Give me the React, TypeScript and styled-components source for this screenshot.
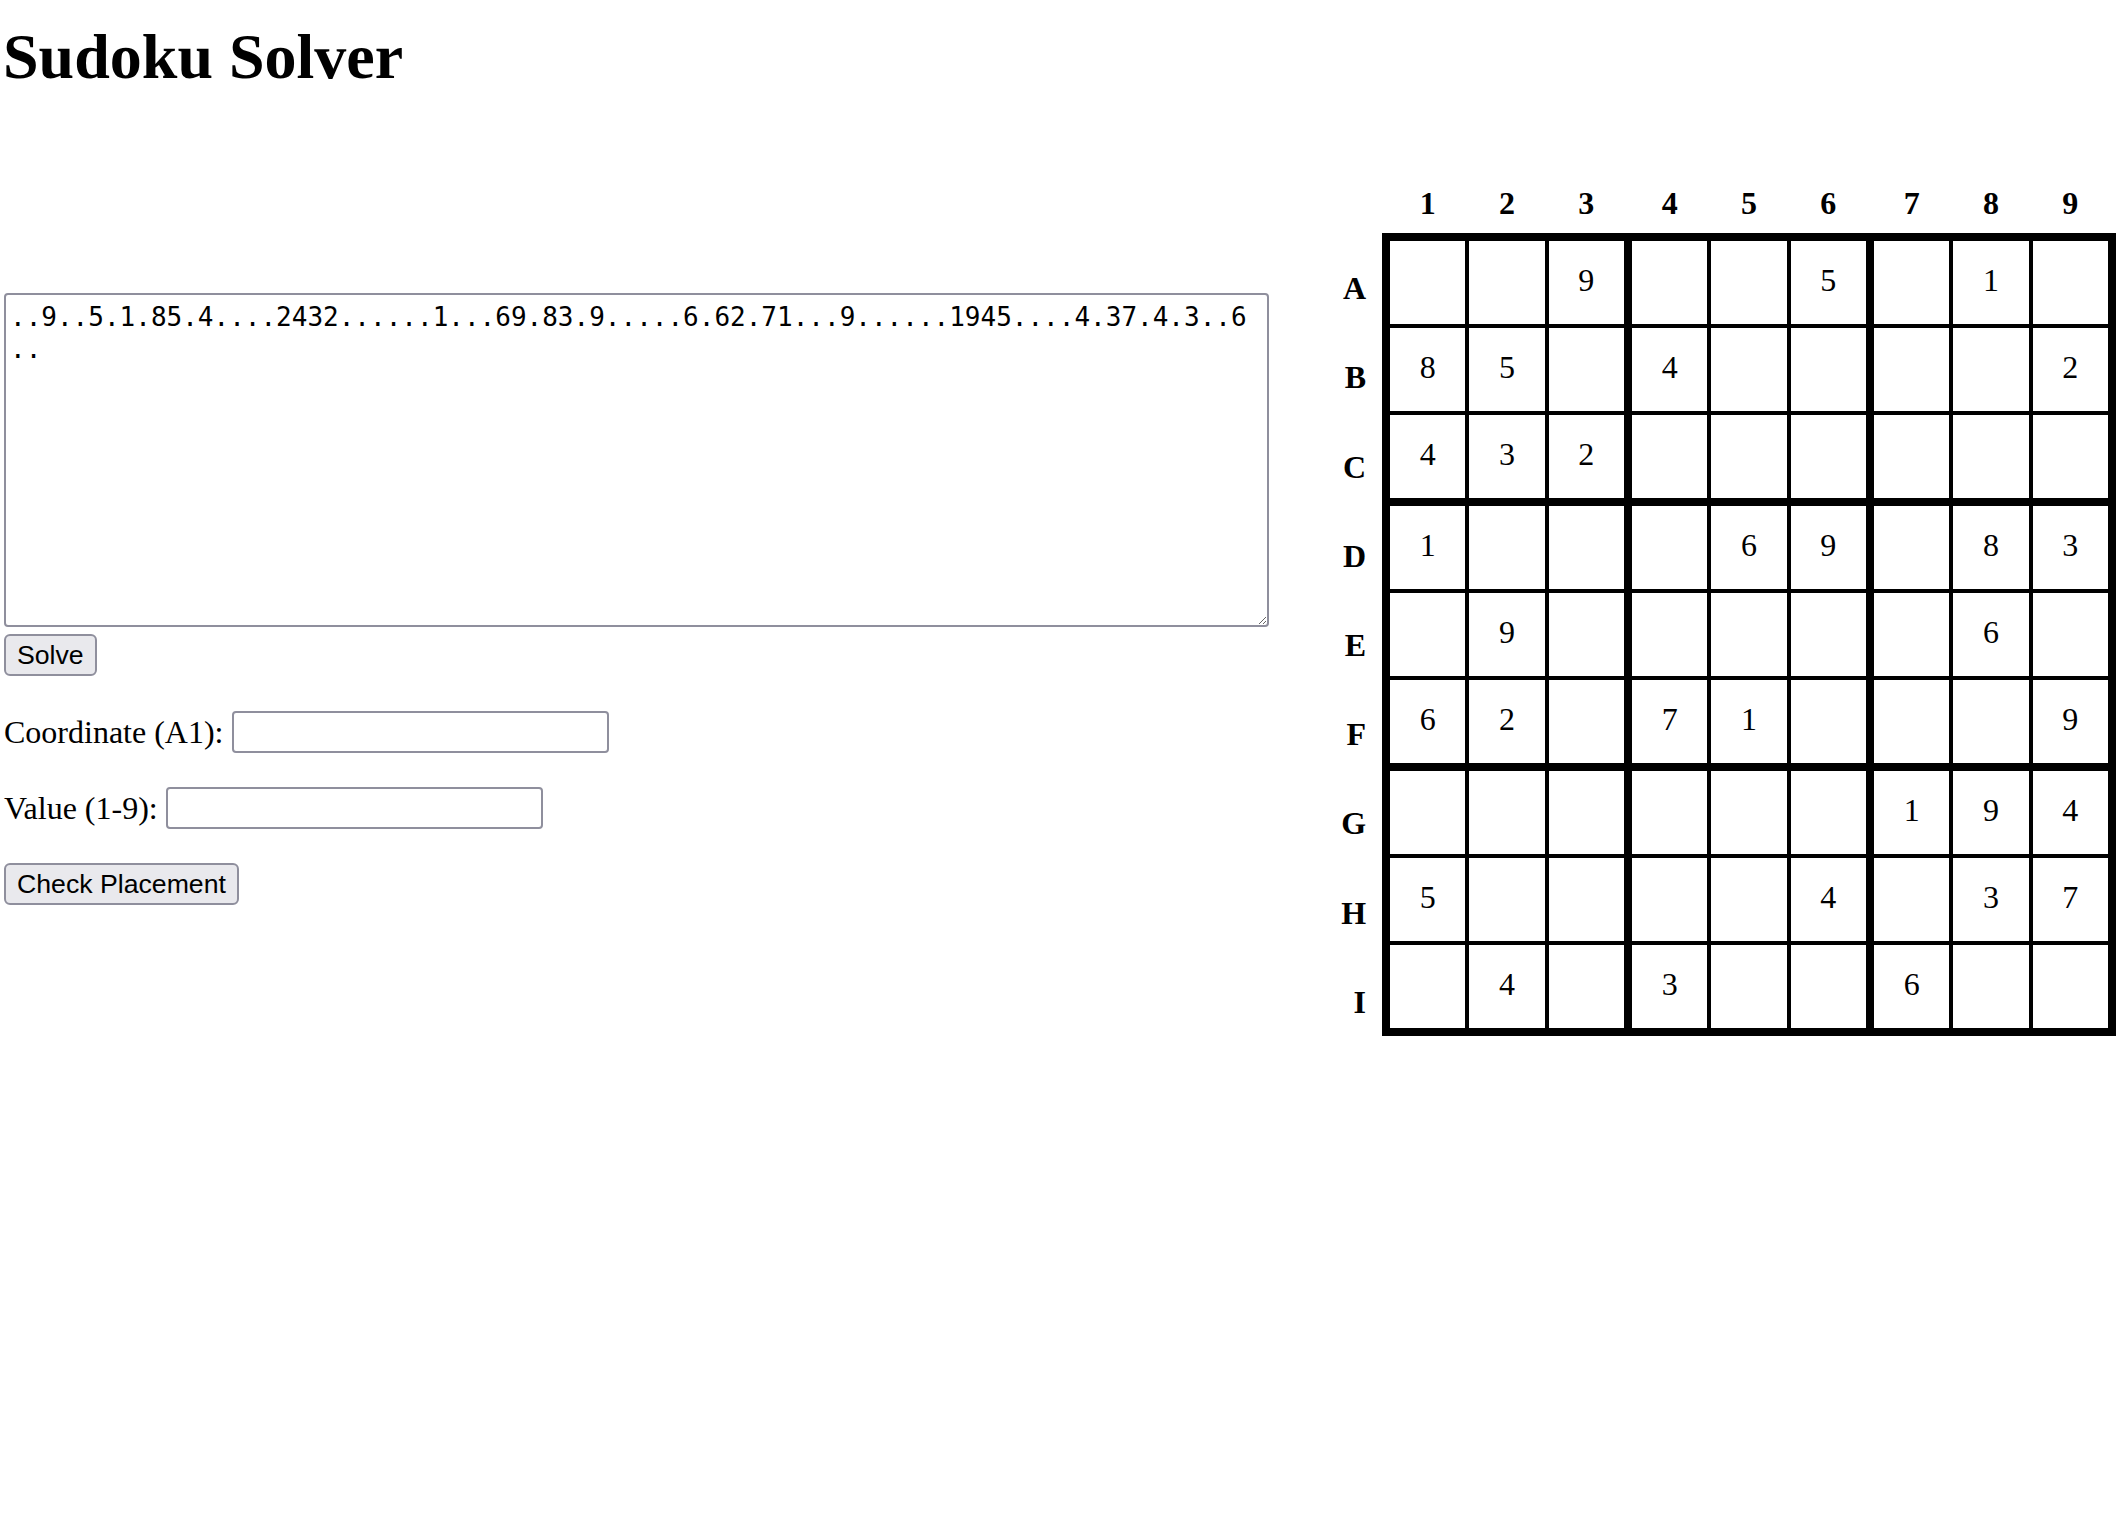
import React from "react";
import styled, { createGlobalStyle } from "styled-components";

const PUZZLE =
  "..9..5.1.85.4....2432......1...69.83.9.....6.62.71...9......1945....4.37.4.3..6..";
const ROWS = "ABCDEFGHI".split("");
const COLS = [1, 2, 3, 4, 5, 6, 7, 8, 9];

const CELL_W = 226 / 3;
const CELL_H = 83;

const GlobalStyle = createGlobalStyle`
  html, body {
    margin: 0;
    padding: 0;
    background: #fff;
  }
  body {
    font-family: "Liberation Serif", "Times New Roman", serif;
    color: #000;
  }
`;

const Page = styled.div`
  padding: 20px 4px 0 3px;
`;

const Title = styled.h1`
  margin: 0;
  font-size: 64px;
  line-height: 74px;
  font-weight: 700;
`;

const Content = styled.div`
  display: flex;
  justify-content: space-between;
  align-items: flex-start;
  margin-top: 79px;
`;

const Controls = styled.div`
  display: flex;
  flex-direction: column;
  align-items: flex-start;
  margin-top: 120px;
  padding-left: 1px;
`;

const PuzzleInput = styled.textarea`
  box-sizing: border-box;
  width: 1265px;
  height: 334px;
  margin: 0;
  padding: 6px 7px 4px 4px;
  border: 2px solid #8f8f9d;
  border-radius: 4px;
  background: #fff;
  color: #000;
  font-family: "DejaVu Sans Mono", "Liberation Mono", monospace;
  font-size: 26px;
  line-height: 32px;
  white-space: pre-wrap;
  overflow-wrap: anywhere;
`;

const Button = styled.button<{ $top: number }>`
  box-sizing: border-box;
  height: 42px;
  margin: ${(p) => p.$top}px 0 0;
  padding: 0 11px;
  border: 2px solid #8f8f9d;
  border-radius: 6px;
  background: #e9e9ed;
  color: #000;
  font-family: "Liberation Sans", Arial, sans-serif;
  font-size: 26.67px;
`;

const Field = styled.label<{ $top: number }>`
  display: flex;
  align-items: center;
  gap: 8px;
  margin-top: ${(p) => p.$top}px;
  font-size: 32px;
`;

const TextField = styled.input`
  box-sizing: border-box;
  width: 377px;
  height: 42px;
  margin: 0;
  padding: 2px 4px;
  border: 2px solid #8f8f9d;
  border-radius: 4px;
  background: #fff;
  font-family: "Liberation Sans", Arial, sans-serif;
  font-size: 26.67px;
`;

const BoardArea = styled.div`
  display: grid;
  grid-template-columns: auto auto;
`;

const Corner = styled.div``;

const ColHeaders = styled.div`
  display: flex;
  gap: 8px;
  height: 60px;
  padding: 0 8px;
`;

const HeaderGroup = styled.div`
  display: grid;
  grid-template-columns: repeat(3, ${CELL_W}px);
  column-gap: 4px;
`;

const ColHeader = styled.div`
  display: flex;
  align-items: center;
  justify-content: center;
  font-size: 32px;
  font-weight: 700;
`;

const RowLabels = styled.div`
  display: grid;
  grid-template-rows: repeat(9, 1fr);
  padding-right: 16px;
`;

const RowLabel = styled.div`
  box-sizing: border-box;
  display: flex;
  align-items: center;
  justify-content: flex-end;
  padding-top: 22px;
  font-size: 32px;
  font-weight: 700;
`;

const Board = styled.div`
  display: grid;
  grid-template-columns: repeat(3, auto);
  gap: 8px;
  border: 8px solid #000;
  background: #000;
`;

const Box = styled.div`
  display: grid;
  grid-template-columns: repeat(3, ${CELL_W}px);
  grid-template-rows: repeat(3, ${CELL_H}px);
  gap: 4px;
`;

const Cell = styled.div`
  box-sizing: border-box;
  display: flex;
  align-items: center;
  justify-content: center;
  padding-bottom: 4px;
  background: #fff;
  font-size: 32px;
`;

const groups = [0, 1, 2];

const cellValue = (box: number, idx: number) => {
  const row = Math.floor(box / 3) * 3 + Math.floor(idx / 3);
  const col = (box % 3) * 3 + (idx % 3);
  const ch = PUZZLE[row * 9 + col];
  return ch === "." ? "" : ch;
};

const App = () => {
  return (
    <>
      <GlobalStyle />
      <Page>
        <Title>Sudoku Solver</Title>
        <Content>
          <Controls>
            <PuzzleInput defaultValue={PUZZLE} spellCheck={false} />
            <Button $top={7}>Solve</Button>
            <Field $top={35}>
              Coordinate (A1):
              <TextField type="text" />
            </Field>
            <Field $top={34}>
              Value (1-9):
              <TextField type="text" />
            </Field>
            <Button $top={34}>Check Placement</Button>
          </Controls>

          <BoardArea>
            <Corner />
            <ColHeaders>
              {groups.map((g) => (
                <HeaderGroup key={g}>
                  {COLS.slice(g * 3, g * 3 + 3).map((c) => (
                    <ColHeader key={c}>{c}</ColHeader>
                  ))}
                </HeaderGroup>
              ))}
            </ColHeaders>
            <RowLabels>
              {ROWS.map((r) => (
                <RowLabel key={r}>{r}</RowLabel>
              ))}
            </RowLabels>
            <Board>
              {Array.from({ length: 9 }, (_, b) => (
                <Box key={b}>
                  {Array.from({ length: 9 }, (_, i) => (
                    <Cell key={i}>{cellValue(b, i)}</Cell>
                  ))}
                </Box>
              ))}
            </Board>
          </BoardArea>
        </Content>
      </Page>
    </>
  );
};

export default App;
